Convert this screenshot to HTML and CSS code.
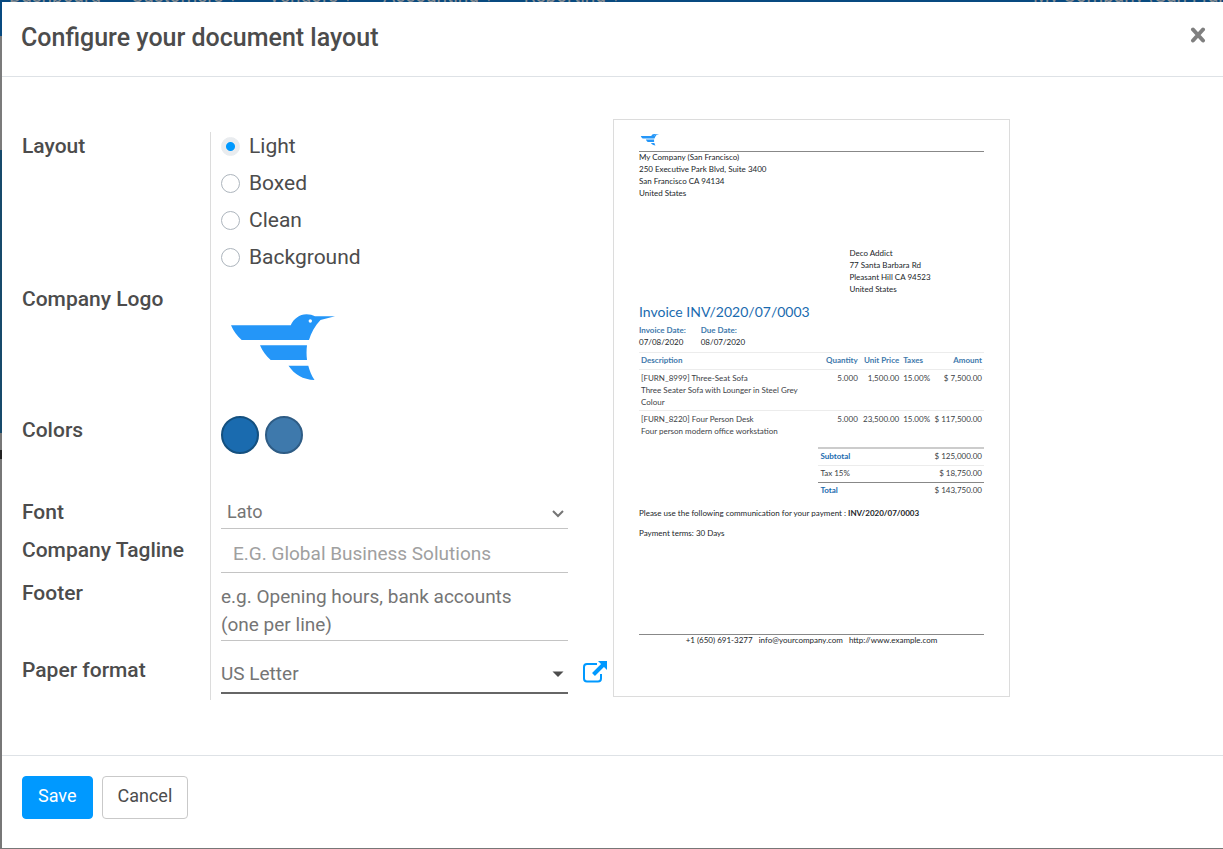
FILE: index.html
```html
<!DOCTYPE html>
<html lang="en">
<head>
<meta charset="utf-8">
<title>Configure your document layout</title>
<meta name="viewport" content="width=device-width, initial-scale=1">
<link rel="stylesheet" href="styles.css">
</head>
<body>
<svg class="sprite" aria-hidden="true">
  <symbol id="bird" viewBox="0 0 125 125">
    <path d="M10 39.3H69.7C72.500 33 78.500 28.300 85.500 28.300C89 28.300 91.500 29 94 30.300H114L99.500 34C94 39.500 90 47 88 54H20.700C16 50 12.500 45 10 39.300Z"/>
    <path d="M39 59.300H86C85.400 64 85.400 69 86 74H49.700C45 70 41.500 65 39 59.300Z"/>
    <path d="M67.500 79.700H87.300C88.600 85 90.600 89.500 93.500 94C82 93.500 73.500 88.500 67.500 79.700Z"/>
    <circle cx="89.300" cy="35" r="1.700" fill="#fff"/>
  </symbol>
</svg>
<div class="backdrop" aria-hidden="true">
  <nav class="topbar">
    <span>Dashboard</span><span>Customers ▾</span><span>Vendors ▾</span><span>Accounting ▾</span><span>Reporting ▾</span>
    <span class="company-menu">My Company (San Francisco)</span>
  </nav>
</div>
<main class="modal" role="dialog" aria-labelledby="title">
  <header class="modal-header">
    <h1 id="title">Configure your document layout</h1>
    <button class="close" type="button" aria-label="Close">
      <svg viewBox="0 0 16 16" width="16" height="16"><path d="M3 2.500L13 13.500M13 2.500L3 13.500"/></svg>
    </button>
  </header>
  <form class="modal-body">
    <div class="fields">
      <span class="label" id="layout-label">Layout</span>
      <div class="field radios" role="radiogroup" aria-labelledby="layout-label">
        <label><input type="radio" name="layout" checked>Light</label>
        <label><input type="radio" name="layout">Boxed</label>
        <label><input type="radio" name="layout">Clean</label>
        <label><input type="radio" name="layout">Background</label>
      </div>
      <span class="label">Company Logo</span>
      <div class="field"><svg class="logo" role="img" aria-label="Company logo"><use href="#bird"/></svg></div>
      <span class="label">Colors</span>
      <div class="field colors">
        <button type="button" class="swatch primary" aria-label="Primary color"></button>
        <button type="button" class="swatch secondary" aria-label="Secondary color"></button>
      </div>
      <label class="label" for="font">Font</label>
      <div class="field">
        <div class="control">
          <select id="font" class="font"><option>Lato</option></select>
          <svg class="arrow" viewBox="0 0 12 8"><path class="chevron" d="M1 1L6 6L11 1"/></svg>
        </div>
      </div>
      <label class="label" for="tagline">Company Tagline</label>
      <div class="field"><input id="tagline" class="tagline" type="text" placeholder="E.G. Global Business Solutions"></div>
      <label class="label" for="footer">Footer</label>
      <div class="field"><textarea id="footer" class="footer-text" rows="2" placeholder="e.g. Opening hours, bank accounts (one per line)"></textarea></div>
      <label class="label" for="paper">Paper format</label>
      <div class="field paper-row">
        <div class="control">
          <input id="paper" class="paper" type="text" value="US Letter">
          <svg class="arrow" viewBox="0 0 12 8"><path class="caret" d="M0.500 1.500H11.500L6 7Z"/></svg>
        </div>
        <a class="external" href="#" aria-label="Open paper format">
          <svg viewBox="0 0 24 22" width="24" height="22"><path class="frame" d="M14 3H4Q1 3 1 6V17.500Q1 20.500 4 20.500H15Q18 20.500 18 17.500V13"/><path class="pointer" d="M10.500 13.500L20 4"/><path class="head" d="M15 0H24V9Z"/></svg>
        </a>
      </div>
    </div>
    <article class="preview">
      <svg class="doc-logo" aria-hidden="true"><use href="#bird"/></svg>
      <address class="company">My Company (San Francisco)<br>250 Executive Park Blvd, Suite 3400<br>San Francisco CA 94134<br>United States</address>
      <address class="customer">Deco Addict<br>77 Santa Barbara Rd<br>Pleasant Hill CA 94523<br>United States</address>
      <h2>Invoice INV/2020/07/0003</h2>
      <dl class="dates">
        <div><dt>Invoice Date:</dt><dd>07/08/2020</dd></div>
        <div><dt>Due Date:</dt><dd>08/07/2020</dd></div>
      </dl>
      <table class="lines">
        <colgroup><col class="c-desc"><col class="c-qty"><col class="c-price"><col class="c-tax"><col class="c-amount"></colgroup>
        <thead><tr><th>Description</th><th class="num">Quantity</th><th class="num">Unit Price</th><th>Taxes</th><th class="num">Amount</th></tr></thead>
        <tbody>
          <tr><td>[FURN_8999] Three-Seat Sofa<br>Three Seater Sofa with Lounger in Steel Grey Colour</td><td class="num">5.000</td><td class="num">1,500.00</td><td>15.00%</td><td class="num">$ 7,500.00</td></tr>
          <tr><td>[FURN_8220] Four Person Desk<br>Four person modern office workstation</td><td class="num">5.000</td><td class="num">23,500.00</td><td>15.00%</td><td class="num">$ 117,500.00</td></tr>
        </tbody>
      </table>
      <table class="totals">
        <tr class="strong-row"><th>Subtotal</th><td class="num">$ 125,000.00</td></tr>
        <tr><td>Tax 15%</td><td class="num">$ 18,750.00</td></tr>
        <tr class="total-row"><th>Total</th><td class="num">$ 143,750.00</td></tr>
      </table>
      <p>Please use the following communication for your payment : <b>INV/2020/07/0003</b></p>
      <p>Payment terms: 30 Days</p>
      <footer class="doc-footer"><span>+1 (650) 691-3277</span><span>info@yourcompany.com</span><span>http://www.example.com</span></footer>
    </article>
  </form>
  <footer class="modal-footer">
    <button class="btn save" type="button">Save</button>
    <button class="btn cancel" type="button">Cancel</button>
  </footer>
</main>
</body>
</html>
```
FILE: styles.css
```css
* { box-sizing: border-box; }
body {
  margin: 0;
  min-height: 100vh;
  display: flex;
  padding: 2px 0 1px 2px;
  background: #666;
  color: #4c4c4c;
  font: 21px/28px Roboto, "Liberation Sans", sans-serif;
}
button, input, select, textarea { font: inherit; color: inherit; margin: 0; }
.sprite { position: absolute; width: 0; height: 0; }
.backdrop {
  position: fixed;
  inset: 0;
  z-index: -1;
  overflow: hidden;
  background:
    linear-gradient(#084a80, #084a80) 0 0 / 100% 2px no-repeat,
    linear-gradient(#084a80 0 36px, #7b7b7b 36px 150px, #174a6b 150px 433px, #777 433px 450px, #222 450px 459px, #777 459px);
}
.topbar {
  display: flex;
  gap: 30px;
  margin-top: -14px;
  padding-left: 9px;
  font-size: 19px;
  line-height: 20px;
  white-space: nowrap;
  color: #8a8f93;
}
.company-menu { margin-left: auto; width: 190px; overflow: hidden; }
.modal { flex: 1; display: flex; flex-direction: column; background: #fff; min-width: 0; }
.modal-header {
  display: flex;
  justify-content: space-between;
  align-items: flex-start;
  padding: 19px 17px 22px 19px;
  border-bottom: 1px solid #dee2e6;
}
h1 { margin: 0; font-size: 25px; line-height: 33px; font-weight: 500; }
.close { display: flex; padding: 6px 0 0; border: 0; background: none; cursor: pointer; }
.close path { stroke: #7f7f7f; stroke-width: 4; stroke-linecap: round; }

.modal-body {
  flex: 1;
  display: grid;
  grid-template-columns: 591fr 397fr 193fr;
  align-items: start;
  padding: 42px 20px 55px;
}
.fields {
  display: grid;
  grid-template-columns: 188px minmax(0, 1fr);
  padding-top: 13px;
}
.label { font-weight: 500; }
.field { border-left: 1px solid #dcdcdc; padding: 0 45px 0 10px; }
.radios { display: flex; flex-direction: column; gap: 9px; padding-bottom: 14px; }
.radios label { display: flex; align-items: center; gap: 9px; }
input[type="radio"] {
  appearance: none;
  width: 19px;
  height: 19px;
  border: 1px solid #adb5bd;
  border-radius: 50%;
}
input[type="radio"]:checked {
  border-color: #e9ecef;
  background: radial-gradient(circle, #0099ff 0 4px, #e9ecef 5px);
}
.logo { display: block; width: 125px; height: 125px; margin: 1px 0 5px; fill: #2496f8; }
.colors { display: flex; gap: 6px; padding-bottom: 44px; }
.swatch { width: 38px; height: 38px; padding: 0; border-radius: 50%; border: 2px solid; }
.primary { background: #1a6baf; border-color: #14507f; }
.secondary { background: #3e79ac; border-color: #2e5c85; }
.control { position: relative; flex: 1; min-width: 0; }
.control select, .control input, .tagline, .footer-text {
  display: block;
  width: 100%;
  border: 0;
  border-bottom: 1px solid #c4c4c4;
  border-radius: 0;
  background: none;
  font-size: 19px;
  color: #757575;
  outline: 0;
}
.control .font { appearance: none; height: 31px; padding: 0 24px 2px 6px; margin-bottom: 7px; font-size: 18px; }
.arrow { position: absolute; right: 4px; top: 12px; width: 12px; height: 8px; pointer-events: none; }
.chevron { fill: none; stroke: #757575; stroke-width: 2; }
.caret { fill: #4c4c4c; }
.tagline { height: 37px; padding: 0 12px 2px; margin-bottom: 6px; }
.tagline::placeholder { color: #a0a0a0; }
.footer-text { height: 58px; margin: 4px 0 15px; padding: 0 24px 1px 0; line-height: 28px; resize: none; overflow: hidden; }
.footer-text::placeholder { color: #757575; }
.paper-row { display: flex; gap: 15px; align-items: flex-start; padding: 0 6px 6px 10px; }
.control .paper { height: 38px; padding: 0 24px 2px 0; border-bottom: 2px solid #666; }
.paper-row .arrow { top: 14px; }
.external { display: block; padding-top: 5px; line-height: 0; }
.external path { fill: none; stroke: #0099ff; stroke-width: 2; }
.external .pointer { stroke-width: 4; }
.external .head { fill: #0099ff; stroke: none; }

.preview {
  border: 1px solid #dcdcdc;
  padding: 9px 25px 50px;
  font: 8px/12px Lato, sans-serif;
  color: #212529;
}
.doc-logo { display: block; width: 22px; height: 22px; fill: #2496f8; }
address { font-style: normal; }
.company { box-shadow: inset 0 1px #888; }
.customer { margin: 48px 0 0 61%; }
h2 { margin: 8px 0 3px; font-size: 14px; line-height: 18px; font-weight: 400; color: #1a6baf; }
.dates { display: flex; gap: 15px; margin: 0 0 4px; }
dd { margin: 0; }
dt, th { font-weight: 700; color: #3e79ac; }
table { border-collapse: collapse; color: #3c4146; }
th, td { padding: 1px 2px 3px; text-align: left; vertical-align: top; border-top: 1px solid #ececec; }
.num { text-align: right; white-space: nowrap; }
.lines { width: 100%; table-layout: fixed; }
.lines td { padding: 2px; }
.c-desc { width: 50%; }
.c-qty { width: 14%; }
.c-price { width: 12%; }
.c-tax { width: 9%; }
.c-amount { width: 15%; }
.totals { width: 48%; margin: 8px 0 8px auto; }
.totals th { color: #1a6baf; }
.strong-row > * { border-top: 2px solid #ccc; }
.total-row > * { border-top: 1px solid #888; }
p { margin: 0 0 8px; }
.doc-footer {
  display: flex;
  justify-content: center;
  gap: 6px;
  margin-top: 95px;
  box-shadow: inset 0 1px #888;
}
.modal-footer {
  display: flex;
  gap: 9px;
  padding: 20px 20px 29px;
  border-top: 1px solid #dee2e6;
}
.btn { height: 43px; padding: 0 15px 3px; border: 1px solid #c9c9c9; border-radius: 4px; background: #fff; font-size: 18px; }
.save { background: #0099ff; border-color: #0099ff; color: #fff; }
```
